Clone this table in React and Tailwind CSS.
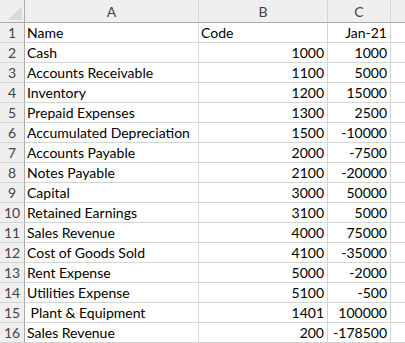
import React from "react";

const rows = [
  ["Name", "Code", "Jan-21", true],
  ["Cash", "1000", "1000"],
  ["Accounts Receivable", "1100", "5000"],
  ["Inventory", "1200", "15000"],
  ["Prepaid Expenses", "1300", "2500"],
  ["Accumulated Depreciation", "1500", "-10000"],
  ["Accounts Payable", "2000", "-7500"],
  ["Notes Payable", "2100", "-20000"],
  ["Capital", "3000", "50000"],
  ["Retained Earnings", "3100", "5000"],
  ["Sales Revenue", "4000", "75000"],
  ["Cost of Goods Sold", "4100", "-35000"],
  ["Rent Expense", "5000", "-2000"],
  ["Utilities Expense", "5100", "-500"],
  ["\u00a0Plant & Equipment", "1401", "100000"],
  ["Sales Revenue", "200", "-178500"],
];

const cell = "border-r border-b border-[#d4d4d4] flex items-end pb-[1px] leading-[16px]";

export default function App() {
  return (
    <div
      className="w-[405px] h-[343px] overflow-hidden bg-white text-black"
      style={{ fontFamily: "Lato, 'Liberation Sans', sans-serif" }}
    >
      <div className="grid grid-cols-[25px_174px_129px_63px_1fr] grid-rows-[23px] auto-rows-[20px] text-[14px]">
        {/* header row */}
        <div className="relative bg-[#efefef] border-r border-b border-[#ababab]">
          <svg className="absolute right-[2px] bottom-[2px]" width="14" height="14" viewBox="0 0 14 14">
            <polygon points="14,0 14,14 0,14" fill="#dadada" />
          </svg>
        </div>
        <div className="bg-[#efefef] border-r border-[#d4d4d4] border-b border-b-[#ababab] flex items-center justify-center pt-[1px] text-[#444]">A</div>
        <div className="bg-[#efefef] border-r border-[#d4d4d4] border-b border-b-[#ababab] flex items-center justify-center pt-[1px] text-[#444]">B</div>
        <div className="bg-[#efefef] border-r border-[#d4d4d4] border-b border-b-[#ababab] flex items-center justify-center pt-[1px] text-[#444]">C</div>
        <div className="bg-[#efefef] border-b border-b-[#ababab]"></div>
        {rows.map((r, i) => (
          <React.Fragment key={i}>
            <div className="bg-[#efefef] border-r border-r-[#ababab] border-b border-b-[#d4d4d4] flex items-end justify-center pb-[1px] leading-[16px] text-[#444]">
              {i + 1}
            </div>
            <div className={cell + " pl-[2px] whitespace-pre"}>{r[0]}</div>
            <div className={cell + (r[3] ? " pl-[2px] justify-start" : " pr-[3px] justify-end")}>{r[1]}</div>
            <div className={cell + " pr-[3px] justify-end"}>{r[2]}</div>
            <div className="border-b border-[#d4d4d4]"></div>
          </React.Fragment>
        ))}
      </div>
    </div>
  );
}
